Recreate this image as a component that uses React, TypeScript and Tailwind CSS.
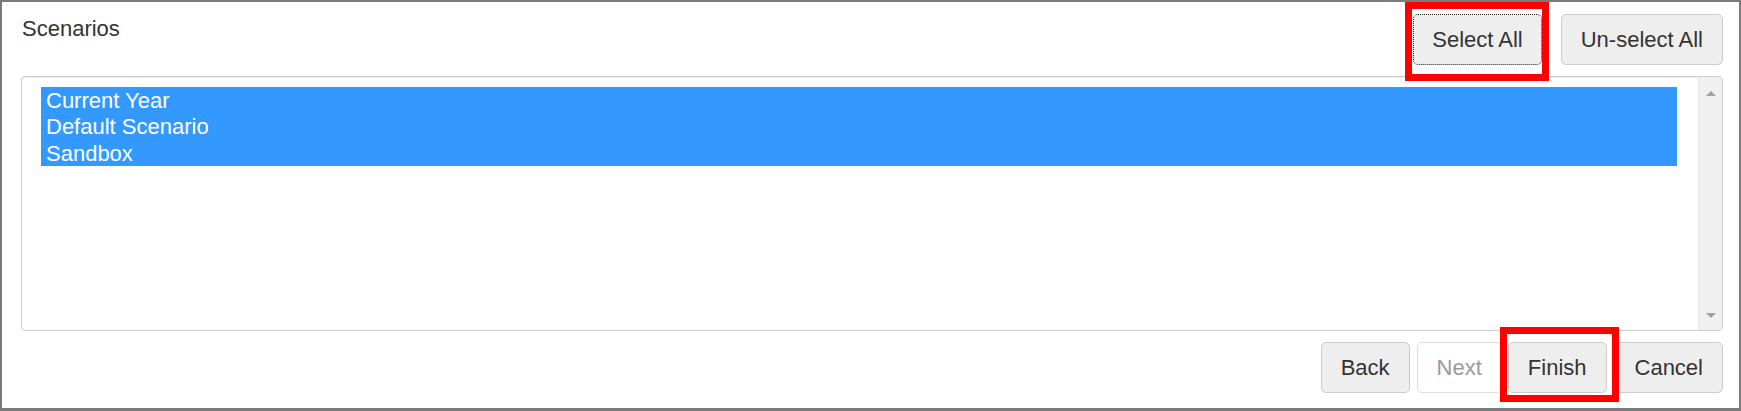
import React from "react";

const btn =
  "h-[51px] rounded-[5px] border border-[#cccccc] bg-[#eeeeee] px-[19px] leading-[25px] text-[#333333]";

const items = ["Current Year", "Default Scenario", "Sandbox"];

function Scrollbar() {
  return (
    <div className="flex w-[24px] flex-col items-center justify-between border-l border-[#e8e8e8] bg-[#f0f0f0] pt-[14px] pb-[12px]">
      <div className="h-0 w-0 border-x-[5px] border-b-[5px] border-x-transparent border-b-[#a0a0a0]" />
      <div className="h-0 w-0 border-x-[5px] border-t-[5px] border-x-transparent border-t-[#a0a0a0]" />
    </div>
  );
}

export default function App() {
  return (
    <div className="h-[411px] w-full border-2 border-b-[3px] border-[#7b7b7b] bg-white pt-[12px] pr-[16px] pl-[19px] font-['Liberation_Sans',Arial,sans-serif] text-[22px] text-[#333333]">
      <div className="flex h-[51px] items-start justify-between">
        <h2 className="mt-[2px] ml-[1px] leading-[25px] font-normal">Scenarios</h2>
        <div className="flex gap-[19px]">
          <div className="relative">
            <button
              type="button"
              className="h-[51px] rounded-[5px] border border-dotted border-[#222222] bg-[#eeeeee] px-[18px] leading-[25px] text-[#333333]"
            >
              Select All
            </button>
            <div className="pointer-events-none absolute -top-[12px] -right-[7px] -bottom-[16px] -left-[8px] z-10 border-[7px] border-[#ff0000]" />
          </div>
          <button type="button" className={`${btn} px-[18.5px]`}>
            Un-select All
          </button>
        </div>
      </div>

      <div className="mt-[11px] flex h-[255px] overflow-hidden rounded-[4px] border border-[#cccccc] shadow-[inset_0_1px_1px_rgba(0,0,0,0.075)]">
        <div className="flex-1 pt-[10px] pr-[21px] pl-[19px]">
          <div className="bg-[#3399ff] text-white">
            {items.map((it) => (
              <div key={it} className="pl-[5px] leading-[26.4px]">
                <span className="relative top-[1px]">{it}</span>
              </div>
            ))}
          </div>
        </div>
        <Scrollbar />
      </div>

      <div className="mt-[11px] flex justify-end">
        <button type="button" className={btn}>
          Back
        </button>
        <button
          type="button"
          disabled
          className="ml-[7px] h-[51px] rounded-[5px] border border-[#dddddd] bg-white px-[19px] leading-[25px] text-[#999999]"
        >
          Next
        </button>
        <div className="relative ml-[6px]">
          <button type="button" className={btn}>
            Finish
          </button>
          <div className="pointer-events-none absolute -top-[15px] -right-[12px] -bottom-[9px] -left-[8px] z-10 border-[7px] border-[#ff0000]" />
        </div>
        <button type="button" className={`${btn} ml-[8px]`}>
          Cancel
        </button>
      </div>
    </div>
  );
}
